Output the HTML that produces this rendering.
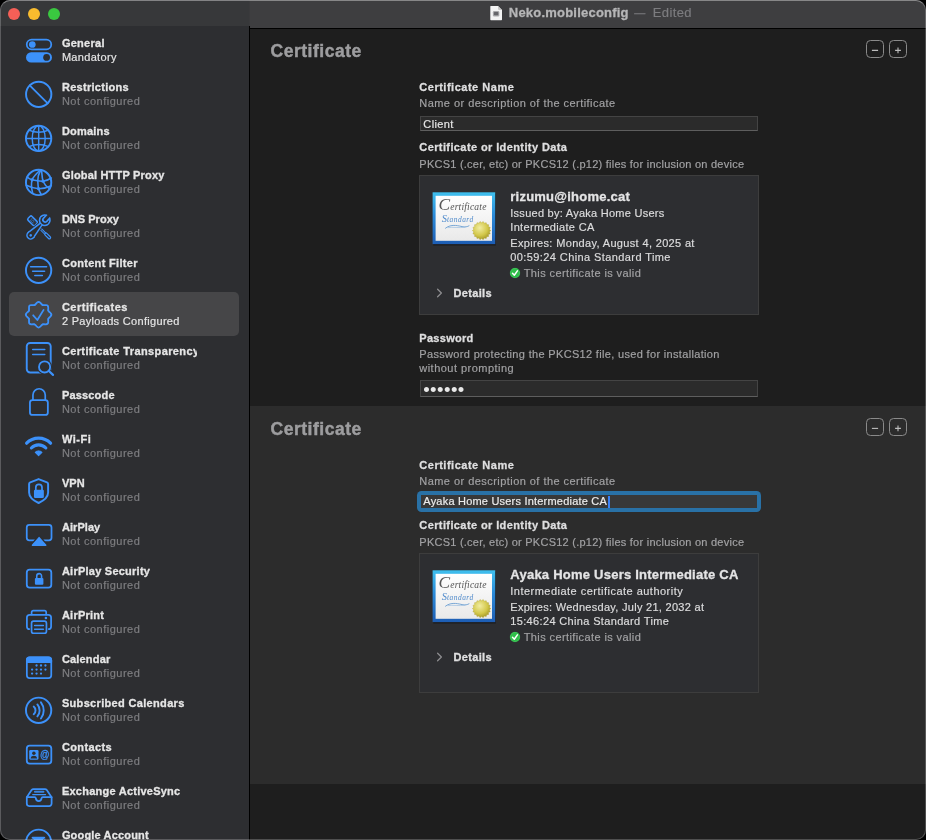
<!DOCTYPE html>
<html lang="en"><head><meta charset="utf-8"><title>Neko.mobileconfig</title>
<style>
html,body{margin:0;padding:0;background:#000;}
body{width:926px;height:840px;overflow:hidden;position:relative;font-family:"Liberation Sans",sans-serif;}
.abs{position:absolute;}
#win{position:absolute;left:0;top:0;width:926px;height:840px;border-radius:10px;overflow:hidden;background:#1e1e1e;}
#winborder{position:absolute;left:0;top:0;width:924px;height:838px;border-radius:10px;border:1px solid rgba(255,255,255,0.22);border-top-color:rgba(255,255,255,0.38);pointer-events:none;z-index:50;}
#sidebar{position:absolute;left:0;top:0;width:249px;height:840px;background:#2d2e31;}
#sbtitle{position:absolute;left:0;top:0;width:249px;height:26px;background:#37383a;}
#divider{position:absolute;left:249px;top:0;width:1px;height:840px;background:#000;}
#titlebar{position:absolute;left:250px;top:0;width:676px;height:28px;background:#3e3e40;border-bottom:1px solid #000;}
#divtop{position:absolute;left:249px;top:0;width:1px;height:26px;background:#3a3a3c;}
.tl{position:absolute;top:7.8px;width:12px;height:12px;border-radius:50%;}
#sec1{position:absolute;left:250px;top:29px;width:676px;height:377px;background:#1e1e1e;}
#sec2{position:absolute;left:250px;top:406px;width:676px;height:378px;background:#2c2c2c;}
#rest{position:absolute;left:250px;top:784px;width:676px;height:56px;background:#1e1e1e;}
#sel{position:absolute;left:9px;top:292px;width:229.8px;height:44px;border-radius:5px;background:#464648;}
#txt{position:absolute;left:0;top:0;width:926px;height:840px;will-change:transform;}
.t{position:absolute;white-space:nowrap;display:block;}
.inp{position:absolute;box-sizing:border-box;background:#2b2b2b;border:1px solid #444444;border-bottom-color:#5e5e5e;}
.box{position:absolute;box-sizing:border-box;border:1px solid #3d3d3d;background:#2d2e31;}
.pm{position:absolute;width:16px;height:16px;border:1px solid #8a8a8a;border-radius:4.5px;}
.pm svg{position:absolute;left:0;top:0;}
.dot{position:absolute;width:5.2px;height:5.2px;border-radius:50%;background:#e8e8e8;}
</style></head>
<body>
<div id="win">
<div id="sidebar"></div>
<div id="sbtitle"></div>
<div id="titlebar"></div>
<div id="divider"></div><div id="divtop"></div>
<div class="tl" style="left:7.9px;background:#f55f57"></div>
<div class="tl" style="left:27.9px;background:#f9bc2e"></div>
<div class="tl" style="left:47.9px;background:#3ac840"></div>
<div id="sel"></div>
<div id="sec1"></div><div id="sec2"></div><div id="rest"></div>
<svg class="abs" style="left:489px;top:5px" width="15" height="17" viewBox="0 0 15 17">
<path d="M1.3 1.6 Q1.3 0.9 2 0.9 H9 L13 4.9 V14.5 Q13 15.2 12.3 15.2 H2 Q1.3 15.2 1.3 14.5 Z" fill="#f4f4f4"/>
<path d="M9 0.9 L13 4.9 H9.8 Q9 4.9 9 4.1 Z" fill="#c9c9c9"/>
<rect x="3.9" y="6.1" width="6.4" height="5.3" rx="1.2" fill="#a9a9ab"/>
<rect x="4.9" y="7.1" width="4.4" height="3.2" rx="0.8" fill="#66666a"/>
</svg>
<svg class="abs" style="left:0;top:0;will-change:transform" width="250" height="840" viewBox="0 0 250 840" fill="none" stroke="#3c91fa" stroke-width="1.75" stroke-linecap="round" stroke-linejoin="round">
<rect x="26.75" y="39.6" width="24.5" height="9.8" rx="4.9"/>
<circle cx="32.3" cy="44.5" r="3.35" fill="#3c91fa" stroke="none"/>
<rect x="26" y="52.3" width="26" height="10.3" rx="5.15" fill="#3c91fa" stroke="none"/>
<circle cx="46.6" cy="57.45" r="3.4" fill="#2d2e31" stroke="none"/>
<circle cx="38.7" cy="94.3" r="12.65" stroke-width="1.95"/>
<path d="M29.7 85.3 L47.7 103.3" stroke-width="1.8"/>
<circle cx="38.62" cy="138.4" r="12.65" stroke-width="1.95"/>
<ellipse cx="38.7" cy="138.4" rx="6.5" ry="12.65" stroke-width="1.45"/>
<path d="M38.7 125.80000000000001 V151.0 M26.1 138.4 H51.3" stroke-width="1.45"/>
<path d="M28.9 130.1 Q38.7 134.5 48.5 130.1 M28.9 146.70000000000002 Q38.7 142.3 48.5 146.70000000000002" stroke-width="1.45"/>
<circle cx="38.62" cy="182.45" r="12.65" stroke-width="1.95"/>
<g stroke-width="1.6">
<path d="M40.2 170.0 C37 173 33.4 176.5 32.1 179.8 C31.2 183 31.2 187.5 32.6 192.9"/>
<path d="M40.7 170.0 C39 173 37.7 177 37.8 180.5 C37.9 184 38 186.5 38.6 188.7 C39.2 191 40.2 192.8 41.2 194.4"/>
<path d="M41.5 170.0 C41.9 173.5 42 177.5 43 181.2 C44.3 184.3 46.6 186.7 49.6 188.9"/>
<path d="M27.2 177.1 C28.9 178.5 30.4 179.4 32.1 179.8 C35.5 180.7 39.5 181.3 43 181.2 C46 180.9 48.9 179.6 51.3 178.0"/>
<path d="M26.3 185.2 C29.6 186.8 34 188.4 38.6 188.7 C43 188.8 47.5 187.5 51.3 185.7"/>
</g>
<circle cx="32.1" cy="179.8" r="1.65" fill="#3c91fa" stroke="none"/>
<circle cx="43" cy="181.2" r="1.65" fill="#3c91fa" stroke="none"/>
<circle cx="38.6" cy="188.7" r="1.65" fill="#3c91fa" stroke="none"/>
<g transform="translate(28.85 217.15) rotate(45)">
<rect x="0.3" y="-2.75" width="9.9" height="5.5" rx="1.5" stroke-width="1.6"/>
<path d="M2.8 -1.2 H7.9 M2.8 0 H7.9 M2.8 1.2 H7.9" stroke-width="0.7" stroke-dasharray="1 0.6" stroke-linecap="butt"/>
<path d="M10.6 -0.85 H23 M10.6 0.85 H23" stroke-width="1.0"/>
<path d="M12 0 H22.6" stroke-width="0.6" stroke-dasharray="0.9 0.9" stroke-linecap="butt"/>
<rect x="23.0" y="-1.2" width="7.2" height="2.4" rx="1.2" stroke-width="1.25" fill="#2d2e31"/>
</g>
<g transform="translate(30.7 235.3) rotate(-47)">
<path d="M0 -5.3 L15 -2.9 V2.9 L0 5.3 Z" fill="#2d2e31" stroke="none"/>
<circle cx="0" cy="0" r="5.3" fill="#2d2e31" stroke="none"/><circle cx="20.6" cy="0" r="6.9" fill="#2d2e31" stroke="none"/>
<path d="M0 -4.5 L15.5 -2.05 V2.05 L0 4.5 Z" fill="#3c91fa" stroke="none"/>
<circle cx="0" cy="0" r="4.5" fill="#3c91fa" stroke="none"/><circle cx="20.6" cy="0" r="6.05" fill="#3c91fa" stroke="none"/>
<path d="M0 -2.95 L15.0 -0.55 V0.55 L0 2.95 Z" fill="#2d2e31" stroke="none"/>
<circle cx="0" cy="0" r="2.95" fill="#2d2e31" stroke="none"/><circle cx="20.6" cy="0" r="4.45" fill="#2d2e31" stroke="none"/>
<clipPath id="jawclip"><circle cx="20.6" cy="0" r="6.05"/></clipPath>
<g clip-path="url(#jawclip)"><path d="M30 -3.05 H21.1 A3.05 3.05 0 0 0 21.1 3.05 H30 Z" fill="#3c91fa" stroke="none"/></g>
<path d="M30 -1.45 H21.200000000000003 A1.45 1.45 0 0 0 21.200000000000003 1.45 H30 Z" fill="#2d2e31" stroke="none"/>
<circle cx="0" cy="0" r="1.3" fill="#3c91fa" stroke="none"/>
</g>
<circle cx="38.62" cy="270.3" r="12.65" stroke-width="1.95"/>
<path d="M30.6 266.8 H46.6 M32.6 271.15000000000003 H44.6 M34.8 275.6 H42.4" stroke-width="1.5"/>
<rect x="29.05" y="305.15" width="19.1" height="19.1" rx="2.2" transform="rotate(0 38.6 314.7)" stroke-width="1.9"/>
<rect x="29.05" y="305.15" width="19.1" height="19.1" rx="2.2" transform="rotate(45 38.6 314.7)" stroke-width="1.9"/>
<rect x="29.98" y="306.08" width="17.24" height="17.24" rx="1.35" transform="rotate(0 38.6 314.7)" fill="#464648" stroke="none"/>
<rect x="29.98" y="306.08" width="17.24" height="17.24" rx="1.35" transform="rotate(45 38.6 314.7)" fill="#464648" stroke="none"/>
<path d="M33.2 315.3 L37.35 320.0 L43.6 309.9" stroke-width="1.8"/>
<rect x="26.75" y="342.95" width="23.95" height="29.55" rx="3.4" stroke-width="1.9"/>
<path d="M32.7 349.4 H44.8 M32.7 354.4 H44.8" stroke-width="1.5"/>
<circle cx="44.6" cy="366.9" r="7.5" fill="#2d2e31" stroke="none"/>
<path d="M48 370.3 L53.6 375.6" stroke="#2d2e31" stroke-width="5"/>
<circle cx="44.6" cy="366.9" r="5.6" stroke-width="1.85"/>
<path d="M48.9 371.0 L53.0 374.9" stroke-width="2.2"/>
<rect x="29.95" y="400.05" width="17.9" height="14.85" rx="2.5" stroke-width="1.8"/>
<path d="M32.95 400.3 V394.9 A6.15 6.15 0 0 1 45.25 394.9 V400.3" stroke-width="1.7" stroke-linecap="butt"/>
<path d="M26.62 443.22 A16.8 16.8 0 0 1 50.58 443.22" stroke-width="3.2" stroke-linecap="round"/>
<path d="M31.33 447.98 A10.1 10.1 0 0 1 45.87 447.98" stroke-width="3.1" stroke-linecap="round"/>
<path d="M38.6 455.6 L35.3 452.3 A4.8 4.8 0 0 1 41.9 452.3 Z" fill="#3c91fa" stroke-width="1.1"/>
<path d="M38.6 479.1 L47.0 482.3 Q48.1 482.8 48.1 484 V492.5 C48.1 497.6 43.8 500.6 38.6 503.0 C33.4 500.6 29.1 497.6 29.1 492.5 V484 Q29.1 482.8 30.2 482.3 Z" stroke-width="1.95"/>
<rect x="33.95" y="489.8" width="9.9" height="8.1" rx="1.2" fill="#3c91fa" stroke="none"/>
<path d="M35.8 490.2 V487.45 A3.1 3.1 0 0 1 42.0 487.45 V490.2" stroke-width="1.7" stroke-linecap="butt"/>
<rect x="26.75" y="524.9" width="24.75" height="15.5" rx="2.6" stroke-width="1.75"/>
<path d="M39.1 536.2 L30.2 547 H48 Z" fill="#2d2e31" stroke="#2d2e31" stroke-width="2.6"/>
<path d="M39.1 537.6 L32.4 545.3 H45.8 Z" fill="#3c91fa" stroke-width="1.4"/>
<rect x="26.8" y="569.55" width="24.5" height="18.1" rx="2.9" stroke-width="1.8"/>
<rect x="34.9" y="577.9" width="8.5" height="6.9" rx="1.1" fill="#3c91fa" stroke="none"/>
<path d="M36.75 578.3 V576.0 A2.4 2.4 0 0 1 41.55 576.0 V578.3" stroke-width="1.55" stroke-linecap="butt"/>
<path d="M31.6 614.4 V612.4 A1.7 1.7 0 0 1 33.3 610.7 H44.5 A1.7 1.7 0 0 1 46.2 612.4 V614.4" stroke-width="1.7"/>
<rect x="26.9" y="614.8" width="24.2" height="14.4" rx="2.8" stroke-width="1.75"/>
<rect x="29.9" y="619.5" width="18.2" height="15.4" rx="2.8" fill="#2d2e31" stroke="none"/>
<rect x="31.55" y="621.05" width="14.9" height="12.2" rx="2.1" stroke-width="1.7"/>
<path d="M34.6 625.4 H43.4 M34.6 629.3 H43.4" stroke-width="1.5"/>
<circle cx="45.9" cy="617.95" r="1.3" fill="#3c91fa" stroke="none"/>
<rect x="26.85" y="657.4" width="24.4" height="20.6" rx="2.8" stroke-width="1.75"/>
<path d="M26.85 662.2 V660.2 A2.8 2.8 0 0 1 29.65 657.4 H48.45 A2.8 2.8 0 0 1 51.25 660.2 V662.2 Z" fill="#3c91fa" stroke-width="1.75"/>
<circle cx="36.55" cy="665.5" r="1.15" fill="#3c91fa" stroke="none"/>
<circle cx="41.0" cy="665.5" r="1.15" fill="#3c91fa" stroke="none"/>
<circle cx="45.45" cy="665.5" r="1.15" fill="#3c91fa" stroke="none"/>
<circle cx="32.1" cy="669.55" r="1.15" fill="#3c91fa" stroke="none"/>
<circle cx="36.55" cy="669.55" r="1.15" fill="#3c91fa" stroke="none"/>
<circle cx="41.0" cy="669.55" r="1.15" fill="#3c91fa" stroke="none"/>
<circle cx="45.45" cy="669.55" r="1.15" fill="#3c91fa" stroke="none"/>
<circle cx="32.1" cy="673.6" r="1.15" fill="#3c91fa" stroke="none"/>
<circle cx="36.55" cy="673.6" r="1.15" fill="#3c91fa" stroke="none"/>
<circle cx="41.0" cy="673.6" r="1.15" fill="#3c91fa" stroke="none"/>
<circle cx="38.62" cy="710.3" r="12.65" stroke-width="1.95"/>
<path d="M33.71 706.57 A5.0 5.0 0 0 1 33.71 714.23" stroke-width="1.9"/>
<path d="M37.37 704.43 A9.1 9.1 0 0 1 37.37 716.37" stroke-width="1.9"/>
<path d="M40.95 702.30 A13.3 13.3 0 0 1 40.95 718.50" stroke-width="1.9"/>
<rect x="26.8" y="745.55" width="24.5" height="18.1" rx="2.9" stroke-width="1.8"/>
<rect x="29.2" y="750.1" width="9.3" height="9.6" rx="1.1" fill="#3c91fa" stroke="none"/>
<circle cx="33.85" cy="753.3" r="1.75" fill="#2d2e31" stroke="none"/>
<path d="M30.6 758.6 C30.9 756.4 32.2 755.7 33.85 755.7 C35.5 755.7 36.8 756.4 37.1 758.6 Z" fill="#2d2e31" stroke="none"/>
<text x="40.0" y="758.3" font-family="Liberation Sans,sans-serif" font-size="10.6" fill="#3c91fa" stroke="#3c91fa" stroke-width="0.3" textLength="9.5" lengthAdjust="spacingAndGlyphs">@</text>
<path d="M26.8 797.2 L31.6 790.1 Q32.3 789.1 33.5 789.1 H44.9 Q46.1 789.1 46.8 790.1 L51.6 797.2 V803.6 A2.4 2.4 0 0 1 49.2 806.0 H29.2 A2.4 2.4 0 0 1 26.8 803.6 Z" stroke-width="1.75"/>
<path d="M26.8 797.2 H34.6 Q35.7 797.2 35.8 798.2 C36.2 802.1 41.2 802.1 41.6 798.2 Q41.7 797.2 42.8 797.2 H51.6" stroke-width="1.75"/>
<path d="M34.9 791.75 H43.5" stroke-width="1.9" stroke="#3a84e0"/>
<path d="M32.7 794.6 H45.6" stroke-width="1.1"/>
<circle cx="38.62" cy="842.3" r="12.65" stroke-width="1.95"/>
<rect x="31.5" y="836.8" width="13.8" height="10" rx="1.2" fill="#3c91fa" stroke="none"/>
<path d="M31.3 838.2 L38.4 844 L45.5 838.2" stroke="#2d2e31" stroke-width="0.9"/>
</svg>
<div class="inp" style="left:420px;top:116px;width:338px;height:15px"></div>
<div class="box" style="left:418.6px;top:175px;width:340.4px;height:139.6px"></div>
<div class="inp" style="left:420px;top:380.2px;width:338px;height:16.6px"></div>
<div class="abs" style="left:417px;top:491px;width:344px;height:20.7px;border-radius:4.5px;background:#2971a6"></div>
<div class="abs" style="left:420.8px;top:494.6px;width:336.1px;height:13.3px;background:#383838"></div>
<div class="abs" style="left:608.0px;top:495.6px;width:1.6px;height:12.2px;background:#3b82f6"></div>
<div class="box" style="left:418.6px;top:553px;width:340.4px;height:139.6px"></div>
<svg class="abs" style="left:509.1px;top:266.9px" width="12" height="12" viewBox="0 0 12 12"><circle cx="6" cy="6" r="5.05" fill="#2fbe4a"/><circle cx="6" cy="6" r="4.7" fill="none" stroke="#4ad264" stroke-width="0.5"/><path d="M3.5 6.3 L5.3 8.2 L8.4 3.9" fill="none" stroke="#fff" stroke-width="1.5" stroke-linecap="round" stroke-linejoin="round"/></svg>
<svg class="abs" style="left:509.1px;top:630.9px" width="12" height="12" viewBox="0 0 12 12"><circle cx="6" cy="6" r="5.05" fill="#2fbe4a"/><circle cx="6" cy="6" r="4.7" fill="none" stroke="#4ad264" stroke-width="0.5"/><path d="M3.5 6.3 L5.3 8.2 L8.4 3.9" fill="none" stroke="#fff" stroke-width="1.5" stroke-linecap="round" stroke-linejoin="round"/></svg>
<svg class="abs" style="left:435.6px;top:287.5px" width="8" height="10" viewBox="0 0 8 10"><path d="M1.6 1.2 L5.4 5 L1.6 8.8" fill="none" stroke="#8e8e90" stroke-width="1.25" stroke-linecap="round" stroke-linejoin="round"/></svg>
<svg class="abs" style="left:435.6px;top:651.5px" width="8" height="10" viewBox="0 0 8 10"><path d="M1.6 1.2 L5.4 5 L1.6 8.8" fill="none" stroke="#8e8e90" stroke-width="1.25" stroke-linecap="round" stroke-linejoin="round"/></svg>
<div class="pm" style="left:866px;top:40px"><svg width="16" height="16" viewBox="0 0 16 16"><path d="M4.9 9.4 H11.1" stroke="#bdbdbd" stroke-width="1.1"/></svg></div>
<div class="pm" style="left:889px;top:40px"><svg width="16" height="16" viewBox="0 0 16 16"><path d="M5.1 9.4 H10.9 M8 6.5 V12.3" stroke="#bdbdbd" stroke-width="1.1"/></svg></div>
<div class="pm" style="left:866px;top:418px"><svg width="16" height="16" viewBox="0 0 16 16"><path d="M4.9 9.4 H11.1" stroke="#bdbdbd" stroke-width="1.1"/></svg></div>
<div class="pm" style="left:889px;top:418px"><svg width="16" height="16" viewBox="0 0 16 16"><path d="M5.1 9.4 H10.9 M8 6.5 V12.3" stroke="#bdbdbd" stroke-width="1.1"/></svg></div>
<div id="txt">
<svg class="abs" style="left:432.2px;top:192.0px" width="66" height="56" viewBox="0 0 66 56">
<defs>
<linearGradient id="cba" x1="0" y1="0" x2="0" y2="1"><stop offset="0" stop-color="#3fc0ee"/><stop offset="0.45" stop-color="#2b8ad8"/><stop offset="1" stop-color="#1d5db4"/></linearGradient>
<linearGradient id="cpa" x1="0" y1="0" x2="0" y2="1"><stop offset="0" stop-color="#ffffff"/><stop offset="1" stop-color="#e9e9e9"/></linearGradient>
<radialGradient id="cga" cx="0.4" cy="0.35" r="0.7"><stop offset="0" stop-color="#f1eca0"/><stop offset="0.6" stop-color="#d3c84a"/><stop offset="1" stop-color="#9f9224"/></radialGradient>
</defs>
<rect x="1.2" y="1.6" width="62.6" height="52" fill="#000" opacity="0.35"/>
<rect x="0.6" y="0.3" width="62.6" height="51.8" fill="url(#cba)"/>
<rect x="3.6" y="3.8" width="56.4" height="45" fill="url(#cpa)"/>
<text x="6.6" y="18.0" font-family="'Liberation Serif',serif" font-style="italic" fill="#565656"><tspan font-size="17.4">C</tspan><tspan font-size="9.6" letter-spacing="0.18">ertificate</tspan></text>
<text x="9.8" y="30.0" font-family="'Liberation Serif',serif" font-style="italic" fill="#4f8acb"><tspan font-size="10.4">S</tspan><tspan font-size="7.4" letter-spacing="0.5">tandard</tspan></text>
<path d="M13.5 36.2 C18 32.5 24 33 30 34.6 C33 35.3 35.5 34.8 37 33.8" fill="none" stroke="#6c9fd3" stroke-width="0.9" stroke-linecap="round"/>
<path d="M16 35.6 C21 34.6 27 36.4 33 35.2" fill="none" stroke="#8db5de" stroke-width="0.6" stroke-linecap="round"/>
<polygon points="58.80,38.60 57.38,39.97 58.25,41.75 56.44,42.55 56.65,44.51 54.68,44.65 54.20,46.57 52.30,46.02 51.20,47.66 49.60,46.50 48.00,47.66 46.90,46.02 45.00,46.57 44.52,44.65 42.55,44.51 42.76,42.55 40.95,41.75 41.82,39.97 40.40,38.60 41.82,37.23 40.95,35.45 42.76,34.65 42.55,32.69 44.52,32.55 45.00,30.63 46.90,31.18 48.00,29.54 49.60,30.70 51.20,29.54 52.30,31.18 54.20,30.63 54.68,32.55 56.65,32.69 56.44,34.65 58.25,35.45 57.38,37.23" fill="url(#cga)" stroke="#b3a535" stroke-width="0.4"/>
</svg>
<svg class="abs" style="left:432.2px;top:570.0px" width="66" height="56" viewBox="0 0 66 56">
<defs>
<linearGradient id="cbb" x1="0" y1="0" x2="0" y2="1"><stop offset="0" stop-color="#3fc0ee"/><stop offset="0.45" stop-color="#2b8ad8"/><stop offset="1" stop-color="#1d5db4"/></linearGradient>
<linearGradient id="cpb" x1="0" y1="0" x2="0" y2="1"><stop offset="0" stop-color="#ffffff"/><stop offset="1" stop-color="#e9e9e9"/></linearGradient>
<radialGradient id="cgb" cx="0.4" cy="0.35" r="0.7"><stop offset="0" stop-color="#f1eca0"/><stop offset="0.6" stop-color="#d3c84a"/><stop offset="1" stop-color="#9f9224"/></radialGradient>
</defs>
<rect x="1.2" y="1.6" width="62.6" height="52" fill="#000" opacity="0.35"/>
<rect x="0.6" y="0.3" width="62.6" height="51.8" fill="url(#cbb)"/>
<rect x="3.6" y="3.8" width="56.4" height="45" fill="url(#cpb)"/>
<text x="6.6" y="18.0" font-family="'Liberation Serif',serif" font-style="italic" fill="#565656"><tspan font-size="17.4">C</tspan><tspan font-size="9.6" letter-spacing="0.18">ertificate</tspan></text>
<text x="9.8" y="30.0" font-family="'Liberation Serif',serif" font-style="italic" fill="#4f8acb"><tspan font-size="10.4">S</tspan><tspan font-size="7.4" letter-spacing="0.5">tandard</tspan></text>
<path d="M13.5 36.2 C18 32.5 24 33 30 34.6 C33 35.3 35.5 34.8 37 33.8" fill="none" stroke="#6c9fd3" stroke-width="0.9" stroke-linecap="round"/>
<path d="M16 35.6 C21 34.6 27 36.4 33 35.2" fill="none" stroke="#8db5de" stroke-width="0.6" stroke-linecap="round"/>
<polygon points="58.80,38.60 57.38,39.97 58.25,41.75 56.44,42.55 56.65,44.51 54.68,44.65 54.20,46.57 52.30,46.02 51.20,47.66 49.60,46.50 48.00,47.66 46.90,46.02 45.00,46.57 44.52,44.65 42.55,44.51 42.76,42.55 40.95,41.75 41.82,39.97 40.40,38.60 41.82,37.23 40.95,35.45 42.76,34.65 42.55,32.69 44.52,32.55 45.00,30.63 46.90,31.18 48.00,29.54 49.60,30.70 51.20,29.54 52.30,31.18 54.20,30.63 54.68,32.55 56.65,32.69 56.44,34.65 58.25,35.45 57.38,37.23" fill="url(#cgb)" stroke="#b3a535" stroke-width="0.4"/>
</svg>
<span class="t" id="sa0" style="-webkit-text-stroke:0.3px #e6e6e6;left:61.90px;top:36.00px;font-size:11px;line-height:15px;font-weight:700;color:#e6e6e6;letter-spacing:0.265px;">General</span>
<span class="t" id="sb0" style="-webkit-text-stroke:0.18px #e6e6e6;left:61.90px;top:50.00px;font-size:11px;line-height:15px;font-weight:400;color:#e6e6e6;letter-spacing:0.316px;">Mandatory</span>
<span class="t" id="sa1" style="-webkit-text-stroke:0.3px #e6e6e6;left:61.90px;top:80.00px;font-size:11px;line-height:15px;font-weight:700;color:#e6e6e6;letter-spacing:0.295px;">Restrictions</span>
<span class="t" id="sb1" style="-webkit-text-stroke:0.18px #7e7e81;left:61.90px;top:94.00px;font-size:11px;line-height:15px;font-weight:400;color:#7e7e81;letter-spacing:0.490px;">Not configured</span>
<span class="t" id="sa2" style="-webkit-text-stroke:0.3px #e6e6e6;left:61.90px;top:124.00px;font-size:11px;line-height:15px;font-weight:700;color:#e6e6e6;letter-spacing:0.211px;">Domains</span>
<span class="t" id="sb2" style="-webkit-text-stroke:0.18px #7e7e81;left:61.90px;top:138.00px;font-size:11px;line-height:15px;font-weight:400;color:#7e7e81;letter-spacing:0.490px;">Not configured</span>
<span class="t" id="sa3" style="-webkit-text-stroke:0.3px #e6e6e6;left:61.90px;top:168.00px;font-size:11px;line-height:15px;font-weight:700;color:#e6e6e6;letter-spacing:0.187px;">Global HTTP Proxy</span>
<span class="t" id="sb3" style="-webkit-text-stroke:0.18px #7e7e81;left:61.90px;top:182.00px;font-size:11px;line-height:15px;font-weight:400;color:#7e7e81;letter-spacing:0.490px;">Not configured</span>
<span class="t" id="sa4" style="-webkit-text-stroke:0.3px #e6e6e6;left:61.90px;top:212.00px;font-size:11px;line-height:15px;font-weight:700;color:#e6e6e6;letter-spacing:0.021px;">DNS Proxy</span>
<span class="t" id="sb4" style="-webkit-text-stroke:0.18px #7e7e81;left:61.90px;top:226.00px;font-size:11px;line-height:15px;font-weight:400;color:#7e7e81;letter-spacing:0.490px;">Not configured</span>
<span class="t" id="sa5" style="-webkit-text-stroke:0.3px #e6e6e6;left:61.90px;top:256.00px;font-size:11px;line-height:15px;font-weight:700;color:#e6e6e6;letter-spacing:0.314px;">Content Filter</span>
<span class="t" id="sb5" style="-webkit-text-stroke:0.18px #7e7e81;left:61.90px;top:270.00px;font-size:11px;line-height:15px;font-weight:400;color:#7e7e81;letter-spacing:0.490px;">Not configured</span>
<span class="t" id="sa6" style="-webkit-text-stroke:0.3px #e6e6e6;left:61.90px;top:300.00px;font-size:11px;line-height:15px;font-weight:700;color:#e6e6e6;letter-spacing:0.509px;">Certificates</span>
<span class="t" id="sb6" style="-webkit-text-stroke:0.18px #e6e6e6;left:61.90px;top:314.00px;font-size:11px;line-height:15px;font-weight:400;color:#e6e6e6;letter-spacing:0.311px;">2 Payloads Configured</span>
<span class="t" id="sa7" style="-webkit-text-stroke:0.3px #e6e6e6;left:61.90px;top:344.00px;font-size:11px;line-height:15px;font-weight:700;color:#e6e6e6;letter-spacing:0.379px;width:135px;overflow:hidden;">Certificate Transparency</span>
<span class="t" id="sb7" style="-webkit-text-stroke:0.18px #7e7e81;left:61.90px;top:358.00px;font-size:11px;line-height:15px;font-weight:400;color:#7e7e81;letter-spacing:0.490px;">Not configured</span>
<span class="t" id="sa8" style="-webkit-text-stroke:0.3px #e6e6e6;left:61.90px;top:388.00px;font-size:11px;line-height:15px;font-weight:700;color:#e6e6e6;letter-spacing:0.179px;">Passcode</span>
<span class="t" id="sb8" style="-webkit-text-stroke:0.18px #7e7e81;left:61.90px;top:402.00px;font-size:11px;line-height:15px;font-weight:400;color:#7e7e81;letter-spacing:0.490px;">Not configured</span>
<span class="t" id="sa9" style="-webkit-text-stroke:0.3px #e6e6e6;left:61.90px;top:432.00px;font-size:11px;line-height:15px;font-weight:700;color:#e6e6e6;letter-spacing:0.544px;">Wi-Fi</span>
<span class="t" id="sb9" style="-webkit-text-stroke:0.18px #7e7e81;left:61.90px;top:446.00px;font-size:11px;line-height:15px;font-weight:400;color:#7e7e81;letter-spacing:0.490px;">Not configured</span>
<span class="t" id="sa10" style="-webkit-text-stroke:0.3px #e6e6e6;left:61.90px;top:476.00px;font-size:11px;line-height:15px;font-weight:700;color:#e6e6e6;letter-spacing:0.113px;">VPN</span>
<span class="t" id="sb10" style="-webkit-text-stroke:0.18px #7e7e81;left:61.90px;top:490.00px;font-size:11px;line-height:15px;font-weight:400;color:#7e7e81;letter-spacing:0.490px;">Not configured</span>
<span class="t" id="sa11" style="-webkit-text-stroke:0.3px #e6e6e6;left:61.90px;top:520.00px;font-size:11px;line-height:15px;font-weight:700;color:#e6e6e6;letter-spacing:0.068px;">AirPlay</span>
<span class="t" id="sb11" style="-webkit-text-stroke:0.18px #7e7e81;left:61.90px;top:534.00px;font-size:11px;line-height:15px;font-weight:400;color:#7e7e81;letter-spacing:0.490px;">Not configured</span>
<span class="t" id="sa12" style="-webkit-text-stroke:0.3px #e6e6e6;left:61.90px;top:564.00px;font-size:11px;line-height:15px;font-weight:700;color:#e6e6e6;letter-spacing:0.243px;">AirPlay Security</span>
<span class="t" id="sb12" style="-webkit-text-stroke:0.18px #7e7e81;left:61.90px;top:578.00px;font-size:11px;line-height:15px;font-weight:400;color:#7e7e81;letter-spacing:0.490px;">Not configured</span>
<span class="t" id="sa13" style="-webkit-text-stroke:0.3px #e6e6e6;left:61.90px;top:608.00px;font-size:11px;line-height:15px;font-weight:700;color:#e6e6e6;letter-spacing:0.247px;">AirPrint</span>
<span class="t" id="sb13" style="-webkit-text-stroke:0.18px #7e7e81;left:61.90px;top:622.00px;font-size:11px;line-height:15px;font-weight:400;color:#7e7e81;letter-spacing:0.490px;">Not configured</span>
<span class="t" id="sa14" style="-webkit-text-stroke:0.3px #e6e6e6;left:61.90px;top:652.00px;font-size:11px;line-height:15px;font-weight:700;color:#e6e6e6;letter-spacing:0.187px;">Calendar</span>
<span class="t" id="sb14" style="-webkit-text-stroke:0.18px #7e7e81;left:61.90px;top:666.00px;font-size:11px;line-height:15px;font-weight:400;color:#7e7e81;letter-spacing:0.490px;">Not configured</span>
<span class="t" id="sa15" style="-webkit-text-stroke:0.3px #e6e6e6;left:61.90px;top:696.00px;font-size:11px;line-height:15px;font-weight:700;color:#e6e6e6;letter-spacing:0.330px;">Subscribed Calendars</span>
<span class="t" id="sb15" style="-webkit-text-stroke:0.18px #7e7e81;left:61.90px;top:710.00px;font-size:11px;line-height:15px;font-weight:400;color:#7e7e81;letter-spacing:0.490px;">Not configured</span>
<span class="t" id="sa16" style="-webkit-text-stroke:0.3px #e6e6e6;left:61.90px;top:740.00px;font-size:11px;line-height:15px;font-weight:700;color:#e6e6e6;letter-spacing:0.379px;">Contacts</span>
<span class="t" id="sb16" style="-webkit-text-stroke:0.18px #7e7e81;left:61.90px;top:754.00px;font-size:11px;line-height:15px;font-weight:400;color:#7e7e81;letter-spacing:0.490px;">Not configured</span>
<span class="t" id="sa17" style="-webkit-text-stroke:0.3px #e6e6e6;left:61.90px;top:784.00px;font-size:11px;line-height:15px;font-weight:700;color:#e6e6e6;letter-spacing:0.244px;">Exchange ActiveSync</span>
<span class="t" id="sb17" style="-webkit-text-stroke:0.18px #7e7e81;left:61.90px;top:798.00px;font-size:11px;line-height:15px;font-weight:400;color:#7e7e81;letter-spacing:0.490px;">Not configured</span>
<span class="t" id="sa18" style="-webkit-text-stroke:0.3px #e6e6e6;left:61.90px;top:828.00px;font-size:11px;line-height:15px;font-weight:700;color:#e6e6e6;letter-spacing:0.171px;">Google Account</span>
<span class="t" id="sb18" style="-webkit-text-stroke:0.18px #7e7e81;left:61.90px;top:842.00px;font-size:11px;line-height:15px;font-weight:400;color:#7e7e81;letter-spacing:0.490px;">Not configured</span>
<span class="t" id="ttl" style="-webkit-text-stroke:0.3px #b6b6b7;left:508.80px;top:4.00px;font-size:13px;line-height:17px;font-weight:700;color:#b6b6b7;letter-spacing:0.216px;">Neko.mobileconfig</span>
<span class="t" id="dash" style="-webkit-text-stroke:0.3px #6f6f72;left:634.30px;top:6.00px;font-size:11px;line-height:15px;font-weight:700;color:#6f6f72;letter-spacing:0.000px;">—</span>
<span class="t" id="edit" style="-webkit-text-stroke:0.18px #7c7c7f;left:652.70px;top:4.00px;font-size:13px;line-height:17px;font-weight:400;color:#7c7c7f;letter-spacing:0.394px;">Edited</span>
<span class="t" id="ah" style="-webkit-text-stroke:0.45px #9d9d9f;left:270.50px;top:41.20px;font-size:17.5px;line-height:21.5px;font-weight:700;color:#9d9d9f;letter-spacing:0.515px;">Certificate</span>
<span class="t" id="al1" style="-webkit-text-stroke:0.3px #dededf;left:419.30px;top:79.60px;font-size:11px;line-height:15px;font-weight:700;color:#dededf;letter-spacing:0.514px;">Certificate Name</span>
<span class="t" id="ad1" style="-webkit-text-stroke:0.18px #a2a2a4;left:419.30px;top:95.60px;font-size:11px;line-height:15px;font-weight:400;color:#a2a2a4;letter-spacing:0.451px;">Name or description of the certificate</span>
<span class="t" id="al2" style="-webkit-text-stroke:0.3px #dededf;left:419.30px;top:139.80px;font-size:11px;line-height:15px;font-weight:700;color:#dededf;letter-spacing:0.396px;">Certificate or Identity Data</span>
<span class="t" id="ad2" style="-webkit-text-stroke:0.18px #a2a2a4;left:419.30px;top:156.60px;font-size:11px;line-height:15px;font-weight:400;color:#a2a2a4;letter-spacing:0.244px;">PKCS1 (.cer, etc) or PKCS12 (.p12) files for inclusion on device</span>
<span class="t" id="act" style="-webkit-text-stroke:0.3px #e4e4e5;left:510.30px;top:188.00px;font-size:13px;line-height:17px;font-weight:700;color:#e4e4e5;letter-spacing:0.230px;">rizumu@ihome.cat</span>
<span class="t" id="ac0" style="-webkit-text-stroke:0.18px #dcdcdd;left:510.30px;top:205.70px;font-size:11px;line-height:15px;font-weight:400;color:#dcdcdd;letter-spacing:0.260px;">Issued by: Ayaka Home Users</span>
<span class="t" id="ac1" style="-webkit-text-stroke:0.18px #dcdcdd;left:510.30px;top:220.30px;font-size:11px;line-height:15px;font-weight:400;color:#dcdcdd;letter-spacing:0.318px;">Intermediate CA</span>
<span class="t" id="ac2" style="-webkit-text-stroke:0.18px #dcdcdd;left:510.30px;top:236.00px;font-size:11px;line-height:15px;font-weight:400;color:#dcdcdd;letter-spacing:0.342px;">Expires: Monday, August 4, 2025 at</span>
<span class="t" id="ac3" style="-webkit-text-stroke:0.18px #dcdcdd;left:510.30px;top:249.70px;font-size:11px;line-height:15px;font-weight:400;color:#dcdcdd;letter-spacing:0.404px;">00:59:24 China Standard Time</span>
<span class="t" id="av" style="-webkit-text-stroke:0.18px #a2a2a4;left:523.70px;top:266.00px;font-size:11px;line-height:15px;font-weight:400;color:#a2a2a4;letter-spacing:0.397px;">This certificate is valid</span>
<span class="t" id="adet" style="-webkit-text-stroke:0.3px #e0e0e1;left:453.50px;top:285.80px;font-size:11px;line-height:15px;font-weight:700;color:#e0e0e1;letter-spacing:0.324px;">Details</span>
<span class="t" id="bh" style="-webkit-text-stroke:0.45px #9d9d9f;left:270.50px;top:419.20px;font-size:17.5px;line-height:21.5px;font-weight:700;color:#9d9d9f;letter-spacing:0.515px;">Certificate</span>
<span class="t" id="bl1" style="-webkit-text-stroke:0.3px #dededf;left:419.30px;top:457.60px;font-size:11px;line-height:15px;font-weight:700;color:#dededf;letter-spacing:0.514px;">Certificate Name</span>
<span class="t" id="bd1" style="-webkit-text-stroke:0.18px #a2a2a4;left:419.30px;top:473.60px;font-size:11px;line-height:15px;font-weight:400;color:#a2a2a4;letter-spacing:0.451px;">Name or description of the certificate</span>
<span class="t" id="bl2" style="-webkit-text-stroke:0.3px #dededf;left:419.30px;top:517.80px;font-size:11px;line-height:15px;font-weight:700;color:#dededf;letter-spacing:0.396px;">Certificate or Identity Data</span>
<span class="t" id="bd2" style="-webkit-text-stroke:0.18px #a2a2a4;left:419.30px;top:534.60px;font-size:11px;line-height:15px;font-weight:400;color:#a2a2a4;letter-spacing:0.244px;">PKCS1 (.cer, etc) or PKCS12 (.p12) files for inclusion on device</span>
<span class="t" id="bct" style="-webkit-text-stroke:0.3px #e4e4e5;left:510.30px;top:566.00px;font-size:13px;line-height:17px;font-weight:700;color:#e4e4e5;letter-spacing:0.238px;">Ayaka Home Users Intermediate CA</span>
<span class="t" id="bc0" style="-webkit-text-stroke:0.18px #dcdcdd;left:510.30px;top:583.70px;font-size:11px;line-height:15px;font-weight:400;color:#dcdcdd;letter-spacing:0.481px;">Intermediate certificate authority</span>
<span class="t" id="bc1" style="-webkit-text-stroke:0.18px #dcdcdd;left:510.30px;top:600.00px;font-size:11px;line-height:15px;font-weight:400;color:#dcdcdd;letter-spacing:0.286px;">Expires: Wednesday, July 21, 2032 at</span>
<span class="t" id="bc2" style="-webkit-text-stroke:0.18px #dcdcdd;left:510.30px;top:613.60px;font-size:11px;line-height:15px;font-weight:400;color:#dcdcdd;letter-spacing:0.345px;">15:46:24 China Standard Time</span>
<span class="t" id="bv" style="-webkit-text-stroke:0.18px #a2a2a4;left:523.70px;top:630.00px;font-size:11px;line-height:15px;font-weight:400;color:#a2a2a4;letter-spacing:0.397px;">This certificate is valid</span>
<span class="t" id="bdet" style="-webkit-text-stroke:0.3px #e0e0e1;left:453.50px;top:649.80px;font-size:11px;line-height:15px;font-weight:700;color:#e0e0e1;letter-spacing:0.324px;">Details</span>
<span class="t" id="in1" style="-webkit-text-stroke:0.18px #e6e6e6;left:423.30px;top:116.60px;font-size:11px;line-height:15px;font-weight:400;color:#e6e6e6;letter-spacing:0.387px;">Client</span>
<span class="t" id="in2" style="-webkit-text-stroke:0.18px #ececec;left:423.30px;top:494.40px;font-size:11px;line-height:15px;font-weight:400;color:#ececec;letter-spacing:0.208px;">Ayaka Home Users Intermediate CA</span>
<span class="t" id="pw" style="-webkit-text-stroke:0.45px #e8e8e8;left:423.20px;top:378.50px;font-size:18.5px;line-height:22.5px;font-weight:400;color:#e8e8e8;letter-spacing:0.000px;letter-spacing:0.455px;-webkit-text-stroke:0;">••••••</span>
<span class="t" id="pl" style="-webkit-text-stroke:0.3px #dededf;left:419.30px;top:331.00px;font-size:11px;line-height:15px;font-weight:700;color:#dededf;letter-spacing:0.293px;">Password</span>
<span class="t" id="pd1" style="-webkit-text-stroke:0.18px #a2a2a4;left:419.30px;top:347.00px;font-size:11px;line-height:15px;font-weight:400;color:#a2a2a4;letter-spacing:0.331px;">Password protecting the PKCS12 file, used for installation</span>
<span class="t" id="pd2" style="-webkit-text-stroke:0.18px #a2a2a4;left:419.30px;top:361.00px;font-size:11px;line-height:15px;font-weight:400;color:#a2a2a4;letter-spacing:0.468px;">without prompting</span>
</div>
</div>
<div id="winborder"></div>
</body></html>
